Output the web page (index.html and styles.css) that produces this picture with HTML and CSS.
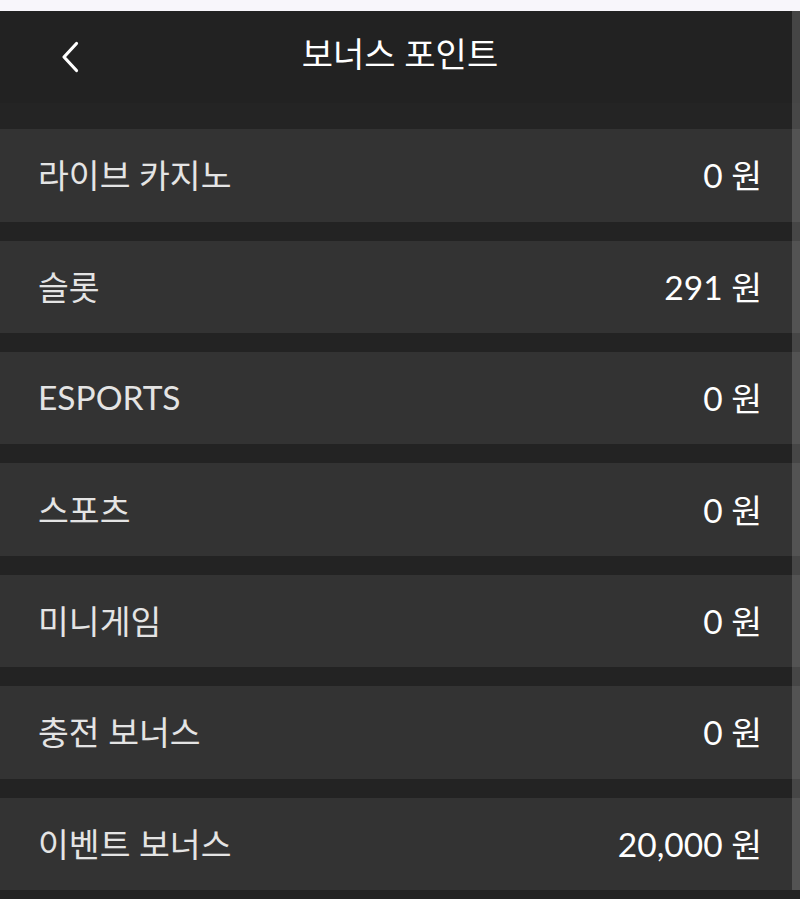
FILE: index.html
```html
<!DOCTYPE html>
<html lang="ko">
<head>
<meta charset="utf-8">
<title>보너스 포인트</title>
<link rel="stylesheet" href="styles.css">
</head>
<body>
<div class="topstrip"></div>
<div class="page">
  <header class="header">
    <button class="back" aria-label="뒤로">
      <svg width="18" height="32" viewBox="0 0 18 32"><path d="M15.5 2.5 L3 16 L15.5 29.5" fill="none" stroke="#fff" stroke-width="3.2" stroke-linecap="round" stroke-linejoin="round"/></svg>
    </button>
    <h1 class="title">보너스 포인트</h1>
  </header>
  <div class="band"></div>
  <ul class="list">
    <li class="row"><span class="label">라이브 카지노</span><span class="value">0 원</span></li>
    <li class="row"><span class="label">슬롯</span><span class="value">291 원</span></li>
    <li class="row"><span class="label">ESPORTS</span><span class="value">0 원</span></li>
    <li class="row"><span class="label">스포츠</span><span class="value">0 원</span></li>
    <li class="row"><span class="label">미니게임</span><span class="value">0 원</span></li>
    <li class="row"><span class="label">충전 보너스</span><span class="value">0 원</span></li>
    <li class="row"><span class="label">이벤트 보너스</span><span class="value">20,000 원</span></li>
  </ul>
  <div class="scrollbar"></div>
</div>
</body>
</html>
```

FILE: styles.css
```css
html, body {
  margin: 0;
  padding: 0;
  background: #232323;
  font-family: "Lato", "Noto Sans CJK KR", sans-serif;
  overflow: hidden;
}
.topstrip {
  height: 10.7px;
  background: #f8f6fb;
}
.page {
  position: relative;
  background: #232323;
}
.header {
  height: 92px;
  background: #222222;
  display: flex;
  align-items: center;
  justify-content: center;
  position: relative;
}
.back {
  position: absolute;
  left: 58px;
  top: 30px;
  background: none;
  border: 0;
  padding: 0;
  width: 24px;
  height: 32px;
  display: flex;
  align-items: center;
  justify-content: center;
}
.title {
  margin: 0 0 6px 0;
  font-size: 34px;
  font-weight: 400;
  color: #ffffff;
  line-height: 1;
}
.band {
  height: 26.6px;
  background: #242424;
}
.list {
  list-style: none;
  margin: 0;
  padding: 0;
  display: flex;
  flex-direction: column;
  gap: 19px;
}
.row {
  box-sizing: border-box;
  height: 92.4px;
  background: #333333;
  display: flex;
  align-items: center;
  justify-content: space-between;
  padding: 0 38px 3px 38px;
  font-size: 33.5px;
}
.label {
  color: #e4e4e4;
}
.value {
  color: #ffffff;
}
.scrollbar {
  position: absolute;
  top: 0;
  right: 0;
  width: 8px;
  height: 1000px;
  background: rgba(255, 255, 255, 0.16);
}
```
